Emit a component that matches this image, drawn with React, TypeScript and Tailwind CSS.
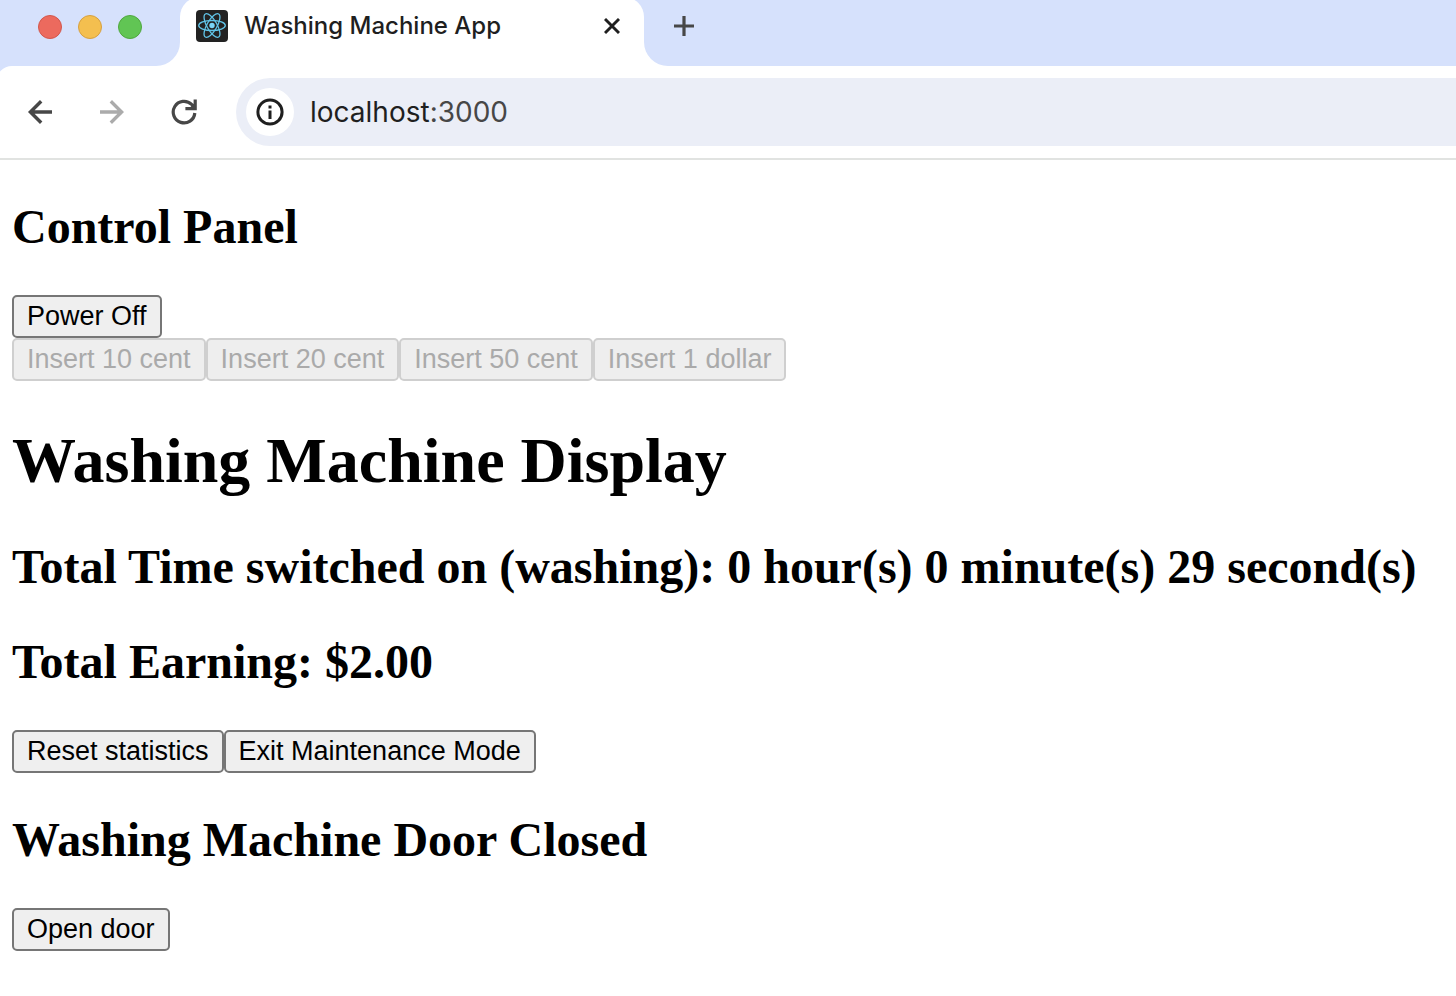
import { useState } from "react";
import type { ButtonHTMLAttributes, ReactNode } from "react";

function ReactLogo() {
  return (
    <svg viewBox="0 0 32 32" className="size-8 shrink-0" aria-hidden="true">
      <rect width="32" height="32" rx="4" fill="#222222" />
      <g fill="none" stroke="#61c4e8" strokeWidth="1.3">
        <ellipse cx="16" cy="15.5" rx="13.3" ry="5" />
        <ellipse cx="16" cy="15.5" rx="13.3" ry="5" transform="rotate(60 16 15.5)" />
        <ellipse cx="16" cy="15.5" rx="13.3" ry="5" transform="rotate(120 16 15.5)" />
      </g>
      <circle cx="16" cy="15.5" r="2.7" fill="#7ad4f6" />
    </svg>
  );
}

function BackIcon() {
  return (
    <svg viewBox="0 0 26 26" className="size-[26px]" fill="none" stroke="currentColor" strokeWidth="3.4" aria-hidden="true">
      <path d="M25 13H3.4M14.2 2.2 3.4 13l10.8 10.8" />
    </svg>
  );
}

function ForwardIcon() {
  return (
    <svg viewBox="0 0 26 26" className="size-[26px]" fill="none" stroke="currentColor" strokeWidth="3.4" aria-hidden="true">
      <path d="M1 13h21.6M11.8 2.2 22.6 13 11.8 23.8" />
    </svg>
  );
}

function ReloadIcon() {
  return (
    <svg viewBox="0 0 26 26" className="size-[26px]" fill="none" stroke="currentColor" strokeWidth="3.2" aria-hidden="true">
      <path d="M23.8 14A10.8 10.8 0 1 1 20.6 5.4l3 3" />
      <path d="M24.2 .6v9H14.4" />
      <path d="M24 3.5v6h-6z" fill="currentColor" stroke="none" />
    </svg>
  );
}

function Browser({ children }: { children: ReactNode }) {
  return (
    <div className="min-h-screen bg-white font-['Inter',sans-serif]">
      <div className="bg-[#d6e1fc]">
        <div className="flex h-[66px] bg-white">
          <div className="flex w-[180px] shrink-0 gap-4 rounded-br-[24px] bg-[#d6e1fc] pt-[15px] pl-[38px]">
            <span className="size-6 rounded-full border border-[#d2574c] bg-[#ec6a5e]" />
            <span className="size-6 rounded-full border border-[#d6a040] bg-[#f4bf4f]" />
            <span className="size-6 rounded-full border border-[#50a73f] bg-[#61c554]" />
          </div>
          <div className="w-[464px] shrink-0 bg-[linear-gradient(#d6e1fc_50%,#fff_50%)]">
            <div className="-mt-[3px] flex h-[69px] items-center rounded-t-[20px] bg-white px-4 pb-[11px]">
              <ReactLogo />
              <span className="ml-4 flex-1 text-[24px] leading-8 font-medium whitespace-nowrap text-[#1f1f1f]">
                Washing Machine App
              </span>
              <button type="button" aria-label="Close tab" className="p-2 text-[#1f1f1f]">
                <svg viewBox="0 0 16 16" className="size-4" stroke="currentColor" strokeWidth="2.9" aria-hidden="true">
                  <path d="m1 1 14 14M15 1 1 15" />
                </svg>
              </button>
            </div>
          </div>
          <div className="flex-1 rounded-bl-[24px] bg-[#d6e1fc] pt-4 pl-[30px]">
            <button type="button" aria-label="New tab" className="block text-[#474747]">
              <svg viewBox="0 0 20 20" className="size-5" stroke="currentColor" strokeWidth="3.2" aria-hidden="true">
                <path d="M0 10h20M10 0v20" />
              </svg>
            </button>
          </div>
        </div>
        <div className="-ml-1 flex h-[94px] items-center rounded-tl-[16px] border-b-2 border-[#e1e3e1] bg-white pl-[31px]">
          <div className="flex gap-[46px] text-[#474747]">
            <button type="button" aria-label="Back">
              <BackIcon />
            </button>
            <button type="button" aria-label="Forward" disabled className="text-[#ababab]">
              <ForwardIcon />
            </button>
            <button type="button" aria-label="Reload">
              <ReloadIcon />
            </button>
          </div>
          <div className="ml-[39px] flex h-[68px] flex-1 items-center rounded-l-full bg-[#ebeef7] pl-[10px]">
            <button type="button" aria-label="Site information" className="flex size-12 items-center justify-center rounded-full bg-white text-[#1f1f1f]">
              <svg viewBox="0 0 28 28" className="size-7" fill="none" stroke="currentColor" strokeWidth="3" aria-hidden="true">
                <circle cx="14" cy="14" r="12.1" />
                <path d="M14 12.6V21M14 7.4v3" />
              </svg>
            </button>
            <a href="http://localhost:3000" className="ml-4 text-[28px] leading-9 text-[#1f1f1f]">
              localhost<span className="text-[#474747]">:3000</span>
            </a>
          </div>
        </div>
      </div>
      {children}
    </div>
  );
}

function PlainButton(props: ButtonHTMLAttributes<HTMLButtonElement>) {
  return (
    <button
      type="button"
      className="h-[43px] rounded-[5px] border-2 border-[#767676] bg-[#efefef] px-[13px] pb-px font-['Liberation_Sans',sans-serif] text-[27px] leading-[30px] whitespace-nowrap text-black disabled:border-[#cfcfcf] disabled:bg-[#eeeeee] disabled:text-[#aaaaaa]"
      {...props}
    />
  );
}

function Subheading({ children }: { children: ReactNode }) {
  return <h2 className="my-10 pb-0.5 text-[48px] leading-[53px] font-bold">{children}</h2>;
}

const coins = ["10 cent", "20 cent", "50 cent", "1 dollar"];

export default function App() {
  const [doorOpen, setDoorOpen] = useState(false);

  return (
    <Browser>
      <main className="flow-root px-3 font-['Liberation_Serif',serif] text-black">
        <Subheading>Control Panel</Subheading>
        <div className="flex">
          <PlainButton>Power Off</PlainButton>
        </div>
        <div className="flex">
          {coins.map((coin) => (
            <PlainButton key={coin} disabled>
              Insert {coin}
            </PlainButton>
          ))}
        </div>
        <h1 className="my-[43px] text-[64px] leading-[73px] font-bold">Washing Machine Display</h1>
        <Subheading>Total Time switched on (washing): 0 hour(s) 0 minute(s) 29 second(s)</Subheading>
        <Subheading>Total Earning: $2.00</Subheading>
        <div className="flex">
          <PlainButton>Reset statistics</PlainButton>
          <PlainButton>Exit Maintenance Mode</PlainButton>
        </div>
        <Subheading>Washing Machine Door {doorOpen ? "Open" : "Closed"}</Subheading>
        <div className="flex">
          <PlainButton onClick={() => setDoorOpen(!doorOpen)}>{doorOpen ? "Close door" : "Open door"}</PlainButton>
        </div>
      </main>
    </Browser>
  );
}
